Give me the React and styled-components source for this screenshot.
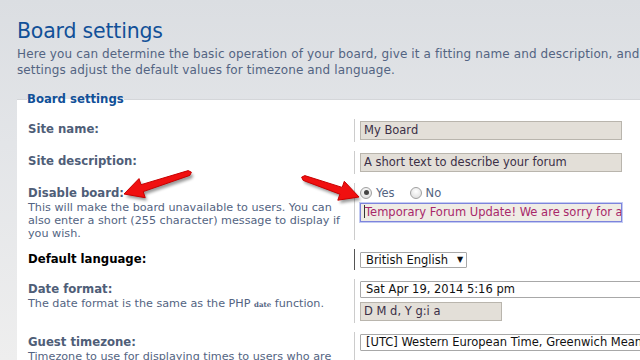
import React from 'react'
import styled, { createGlobalStyle } from 'styled-components'

const GlobalStyle = createGlobalStyle`
  html, body {
    margin: 0;
    padding: 0;
    width: 640px;
    height: 360px;
    overflow: hidden;
  }
  body {
    font-family: "DejaVu Sans", Verdana, sans-serif;
    background: linear-gradient(#dbdee2 0%, #e3e5e8 40%, #eeeeee 100%);
  }
`

const Page = styled.div`
  position: relative;
  width: 640px;
  height: 360px;
  overflow: hidden;
  padding: 16px 0 0 17px;
  box-sizing: border-box;
`

const Title = styled.h1`
  margin: 0;
  font-family: "DejaVu Sans", sans-serif;
  font-weight: normal;
  font-size: 20.5px;
  line-height: 30px;
  color: #115098;
  letter-spacing: -0.2px;
`

const Intro = styled.p`
  margin: 0;
  font-size: 12px;
  line-height: 16px;
  color: #536482;
  white-space: nowrap;
  letter-spacing: 0.12px;
`

const Fieldset = styled.fieldset`
  margin: 14px 0 0 0;
  padding: 13px 0 0 11px;
  border: none;
  border-top: 1px solid #d4d6d9;
  background: #fff;
  width: 640px;
  box-sizing: border-box;
`

const Legend = styled.legend`
  font-size: 11.7px;
  font-weight: bold;
  color: #115098;
  padding: 0;
  margin-left: -1px;
`

const Row = styled.div`
  display: grid;
  grid-template-columns: 326px 1fr;
  margin-bottom: 9px;
`

const Label = styled.div`
  padding: 3px 12px 0 0;
`

const LabelTitle = styled.div`
  font-size: 11.7px;
  font-weight: bold;
  line-height: 15px;
  color: ${p => (p.$dark ? '#000' : '#4f5e78')};
`

const Explain = styled.div`
  font-size: 11.2px;
  line-height: 13px;
  color: #536482;
`

const Code = styled.code`
  font-family: "DejaVu Serif", serif;
  font-size: 7px;
  font-weight: bold;
`

const Field = styled.div`
  border-left: 1px solid ${p => (p.$dark ? '#555' : '#ccc')};
  padding: ${p => (p.$select ? '3px' : '2px')} 0 2px 5px;
  display: flex;
  flex-direction: column;
  align-items: flex-start;
  gap: 4px;
  min-width: 0;
  overflow: hidden;
`

const TextBox = styled.div`
  box-sizing: border-box;
  width: ${p => p.$w}px;
  height: 19px;
  padding: 0 3px;
  font-size: 11.5px;
  line-height: 17px;
  white-space: nowrap;
  overflow: hidden;
  color: ${p => (p.$focus ? '#a8286a' : '#3b2f47')};
  background: ${p => (p.$focus ? '#efece5' : '#e3dfd8')};
  border: 1px solid ${p => (p.$focus ? '#7d84dc' : '#b9b5ad')};
  box-shadow: ${p => (p.$focus ? '0 0 0 1px #c3cbf3' : 'none')};
`

const Caret = styled.span`
  display: inline-block;
  width: 1px;
  height: 13px;
  background: #333;
  vertical-align: -2px;
`

const SelectBox = styled.div`
  box-sizing: border-box;
  width: ${p => p.$w}px;
  height: ${p => (p.$short ? 16 : 17)}px;
  padding: 0 5px;
  font-size: 11.5px;
  line-height: ${p => (p.$short ? 14 : 15)}px;
  white-space: nowrap;
  overflow: hidden;
  color: #111;
  background: #fff;
  border: 1px solid #a8a8a8;
  border-radius: 1px;
  display: flex;
  align-items: center;
  gap: 9px;
`

const SelectArrow = styled.span`
  font-size: 8px;
  line-height: 8px;
`

const Radios = styled.div`
  display: flex;
  align-items: center;
  height: 13px;
  margin-top: 1px;
  font-size: 11.5px;
  color: #536482;
`

const RadioItem = styled.label`
  display: flex;
  align-items: center;
  gap: 4px;
  margin-right: 15px;
`

const RadioDot = styled.span`
  box-sizing: border-box;
  width: 12px;
  height: 12px;
  border-radius: 50%;
  border: 1px solid #a0a0a0;
  background: radial-gradient(circle at 50% 35%, #ffffff 0%, #d8d8d8 100%);
  display: flex;
  align-items: center;
  justify-content: center;
  &::after {
    content: '';
    width: 5px;
    height: 5px;
    border-radius: 50%;
    background: ${p => (p.$on ? '#444' : 'transparent')};
  }
`

const Overlay = styled.svg`
  position: absolute;
  left: 0;
  top: 0;
  pointer-events: none;
`

const Arrow = ({ x1, y1, x2, y2 }) => {
  const dx = x2 - x1
  const dy = y2 - y1
  const len = Math.hypot(dx, dy)
  const ux = dx / len
  const uy = dy / len
  const px = -uy
  const py = ux
  const head = 19
  const hw = 10
  const sw = 3.6
  const bx = x2 - ux * head
  const by = y2 - uy * head
  const pts = [
    [x1 + px * 2.5, y1 + py * 2.5],
    [bx + px * sw, by + py * sw],
    [bx + px * hw, by + py * hw],
    [x2, y2],
    [bx - px * hw, by - py * hw],
    [bx - px * sw, by - py * sw],
    [x1 - px * 2.5, y1 - py * 2.5],
    [x1 - ux * 2.5, y1 - uy * 2.5],
  ]
  const d = 'M' + pts.map(p => p.map(v => v.toFixed(1)).join(',')).join(' L') + ' Z'
  return (
    <g>
      <path d={d} fill="#000" opacity="0.4" transform="translate(2,3)" filter="url(#blur)" />
      <path d={d} fill="#f01010" stroke="#c80000" strokeWidth="1" strokeLinejoin="round" />
    </g>
  )
}

export default function App() {
  return (
    <>
      <GlobalStyle />
      <Page>
        <Title>Board settings</Title>
        <Intro>
          Here you can determine the basic operation of your board, give it a fitting name and description, and via the other
          <br />
          settings adjust the default values for timezone and language.
        </Intro>
        <Fieldset>
          <Legend>Board settings</Legend>

          <Row>
            <Label>
              <LabelTitle>Site name:</LabelTitle>
            </Label>
            <Field>
              <TextBox $w={262}>My Board</TextBox>
            </Field>
          </Row>

          <Row>
            <Label>
              <LabelTitle>Site description:</LabelTitle>
            </Label>
            <Field>
              <TextBox $w={262}>A short text to describe your forum</TextBox>
            </Field>
          </Row>

          <Row>
            <Label>
              <LabelTitle>Disable board:</LabelTitle>
              <Explain>
                This will make the board unavailable to users. You can
                <br />
                also enter a short (255 character) message to display if
                <br />
                you wish.
              </Explain>
            </Label>
            <Field>
              <Radios>
                <RadioItem>
                  <RadioDot $on />
                  Yes
                </RadioItem>
                <RadioItem>
                  <RadioDot />
                  No
                </RadioItem>
              </Radios>
              <TextBox $w={262} $focus>
                <Caret />Temporary Forum Update! We are sorry for any inconvenience
              </TextBox>
            </Field>
          </Row>

          <Row>
            <Label>
              <LabelTitle $dark>Default language:</LabelTitle>
            </Label>
            <Field $dark $select>
              <SelectBox $w={107} $short>
                British English <SelectArrow>▼</SelectArrow>
              </SelectBox>
            </Field>
          </Row>

          <Row>
            <Label>
              <LabelTitle>Date format:</LabelTitle>
              <Explain>
                The date format is the same as the PHP <Code>date</Code> function.
              </Explain>
            </Label>
            <Field>
              <SelectBox $w={300}>Sat Apr 19, 2014 5:16 pm</SelectBox>
              <TextBox $w={142}>D M d, Y g:i a</TextBox>
            </Field>
          </Row>

          <Row>
            <Label>
              <LabelTitle>Guest timezone:</LabelTitle>
              <Explain>Timezone to use for displaying times to users who are not logged in.</Explain>
            </Label>
            <Field>
              <SelectBox $w={300}>[UTC] Western European Time, Greenwich Mean Time</SelectBox>
            </Field>
          </Row>
        </Fieldset>

        <Overlay width="640" height="360" viewBox="0 0 640 360">
          <defs>
            <filter id="blur" x="-20%" y="-20%" width="140%" height="140%">
              <feGaussianBlur stdDeviation="1.5" />
            </filter>
          </defs>
          <Arrow x1={189} y1={173} x2={124} y2={194} />
          <Arrow x1={304} y1={178} x2={359} y2={197} />
        </Overlay>
      </Page>
    </>
  )
}
